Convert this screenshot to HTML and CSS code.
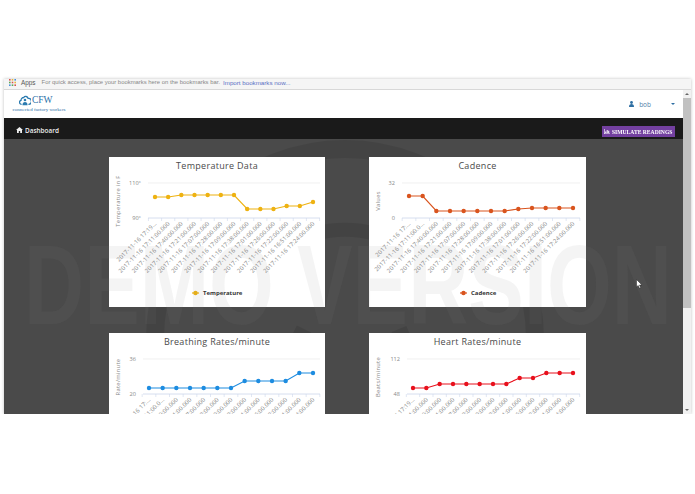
FILE: index.html
```html
<!DOCTYPE html>
<html lang="en">
<head>
  <meta charset="UTF-8" />
  <title>CFW Dashboard</title>
  <link rel="stylesheet" href="styles.css">
</head>
<body>
  <div class="window">
    <div class="bookmarks">
      <svg class="apps-icon" width="7" height="7" viewBox="0 0 7 7">
        <rect x="0" y="0" width="1.6" height="1.6" fill="#d9534f"/><rect x="2.7" y="0" width="1.6" height="1.6" fill="#e8b73a"/><rect x="5.4" y="0" width="1.6" height="1.6" fill="#4a90d9"/>
        <rect x="0" y="2.7" width="1.6" height="1.6" fill="#5aa65a"/><rect x="2.7" y="2.7" width="1.6" height="1.6" fill="#d9534f"/><rect x="5.4" y="2.7" width="1.6" height="1.6" fill="#e8b73a"/>
        <rect x="0" y="5.4" width="1.6" height="1.6" fill="#4a90d9"/><rect x="2.7" y="5.4" width="1.6" height="1.6" fill="#5aa65a"/><rect x="5.4" y="5.4" width="1.6" height="1.6" fill="#d9534f"/>
      </svg>
      <span class="apps">Apps</span>
      <span class="hint">For quick access, place your bookmarks here on the bookmarks bar.</span>
      <a class="import">Import bookmarks now...</a>
    </div>
    <div class="page">
      <div class="main">
        <header class="topbar">
          <div class="logo">
            <div class="logo-mark">
              <svg width="12" height="12" viewBox="0 0 14 13">
                <path d="M3 11.5H2.6A2.4 2.4 0 0 1 2.4 6.8 3 3 0 0 1 5.4 3.6 2.9 2.9 0 0 1 10.6 4.6 2.5 2.5 0 0 1 11.4 11.5H11" fill="none" stroke="#2b7bb0" stroke-width="1.5"/>
                <circle cx="7" cy="6.6" r="1.5" fill="#2b7bb0"/>
                <path d="M4 12.5C4 9.8 5.4 8.8 7 8.8S10 9.8 10 12.5Z" fill="#2b7bb0"/>
              </svg>
              <span class="logo-name">CFW</span>
            </div>
            <div class="logo-sub">connected factory workers</div>
          </div>
          <div class="user">
            <svg width="5" height="6" viewBox="0 0 5 6"><circle cx="2.5" cy="1.5" r="1.4" fill="#2f6fa3"/><path d="M0 6C0 3.8 1 3 2.5 3S5 3.8 5 6Z" fill="#2f6fa3"/></svg>
            <span class="user-name">bob</span>
            <span class="caret"></span>
          </div>
        </header>
        <nav class="navbar">
          <div class="nav-link">
            <svg width="7" height="6" viewBox="0 0 7 6"><path d="M3.5 0 7 3H6V6H4.2V4H2.8V6H1V3H0Z" fill="#eee"/></svg>
            <span>Dashboard</span>
          </div>
          <button class="simulate">
            <svg width="6" height="5" viewBox="0 0 6 5"><path d="M0 0H.6V4.4H6V5H0ZM1.2 2.4H2.2V4H1.2ZM2.7 1H3.7V4H2.7ZM4.2 1.8H5.2V4H4.2Z" fill="#fff"/></svg>
            <span>SIMULATE READINGS</span>
          </button>
        </nav>
        <section class="content">
          <svg class="mark-back" width="679" height="275" viewBox="0 0 679 275">
            <g fill="none" stroke="#000" stroke-opacity="0.09">
              <circle cx="341" cy="200" r="190" stroke-width="18"/>
              <path d="M245 145A112 112 0 0 1 437 145" stroke-width="14"/>
              <path d="M258 275 300 190M430 275 395 190" stroke-width="16"/>
            </g>
          </svg>
          <div class="charts" id="charts"></div>
          <svg class="mark-front" width="679" height="275" viewBox="0 0 679 275">
            <text x="20" y="185" textLength="648" lengthAdjust="spacingAndGlyphs" class="mark-text">DEMO VERSION</text>
          </svg>
          <svg class="cursor" width="7" height="10" viewBox="0 0 7 10"><path d="M.5.5V8L2.2 6.5 3.4 9.3 4.7 8.7 3.5 6H6Z" fill="#fff" stroke="#222" stroke-width=".5"/></svg>
        </section>
      </div>
      <div class="scrollbar">
        <span class="arrow arrow-up"></span>
        <div class="thumb"></div>
        <span class="arrow arrow-down"></span>
      </div>
    </div>
  </div>
  <script src="charts.js"></script>
</body>
</html>
```

FILE: styles.css
```css
body {
  margin: 0;
  background: white;
  font-family: 'Open Sans', 'Liberation Sans', sans-serif;
  overflow: hidden;
}

.window {
  width: 687px;
  height: 335px;
  margin: 79px 4px 0;
  display: flex;
  flex-direction: column;
  box-shadow: 0 0 3px rgba(0,0,0,0.25);
  filter: blur(0.35px);
}

.bookmarks {
  height: 10px;
  flex: none;
  display: flex;
  align-items: flex-start;
  background: #f5f5f5;
  border-bottom: 1px solid #d8d8d8;
  padding-left: 5px;
  font-family: 'Liberation Sans', sans-serif;
  font-size: 6.4px;
  line-height: 7px;
  white-space: nowrap;
  overflow: hidden;
}

.apps-icon {
  margin-right: 5px;
}

.apps {
  color: #555;
  margin-right: 6px;
}

.hint {
  color: #888;
  font-size: 5.9px;
  margin-right: 3px;
}

.import {
  color: #5a6fc4;
  font-size: 6.2px;
}

.page {
  flex: 1;
  display: flex;
  min-height: 0;
}

.main {
  flex: 1;
  display: flex;
  flex-direction: column;
  min-width: 0;
}

.topbar {
  height: 28px;
  flex: none;
  display: flex;
  align-items: center;
  justify-content: space-between;
  background: white;
}

.logo {
  margin-left: 8px;
  width: 54px;
  margin-top: -3px;
}

.logo-mark {
  display: flex;
  align-items: center;
  gap: 1px;
  height: 12px;
  padding-left: 7px;
}

.logo-name {
  font-family: 'Liberation Serif', serif;
  font-size: 9.5px;
  color: #2b6fa8;
}

.logo-sub {
  font-family: 'Liberation Serif', serif;
  font-size: 5px;
  color: #2b6fa8;
  text-align: center;
  white-space: nowrap;
  margin-top: 1px;
}

.user {
  display: flex;
  align-items: center;
  margin-right: 8px;
  font-size: 6.5px;
  color: #4d7ea8;
}

.user-name {
  margin-left: 5px;
  margin-right: 20px;
}

.caret {
  width: 0;
  height: 0;
  border-left: 2px solid transparent;
  border-right: 2px solid transparent;
  border-top: 2px solid #2f6fa3;
}

.navbar {
  height: 21px;
  flex: none;
  display: flex;
  align-items: center;
  justify-content: space-between;
  background: #1a1a1a;
  padding: 0 8px 0 12px;
}

.nav-link {
  display: flex;
  align-items: center;
  gap: 2px;
  color: #eee;
  font-size: 6.4px;
  font-weight: 600;
  margin-top: 3px;
}

.simulate {
  display: flex;
  align-items: center;
  gap: 2px;
  height: 11px;
  width: 73px;
  padding: 0 0 0 2px;
  margin-top: 6px;
  border: none;
  background: #7340a0;
  color: white;
  font-family: 'Liberation Serif', serif;
  font-size: 5.6px;
  font-weight: bold;
  white-space: nowrap;
}

.simulate svg {
  flex: none;
}

.content {
  flex: 1;
  position: relative;
  overflow: hidden;
  background: #4a4a4a;
  padding: 18px 0 0 105px;
}

.charts {
  position: relative;
  display: grid;
  grid-template-columns: 216px 217px;
  column-gap: 44px;
  row-gap: 26px;
}

.card {
  height: 150px;
  background: white;
}

.card svg {
  display: block;
}

.chart-title {
  font-family: 'Open Sans', sans-serif;
  font-size: 9px;
  letter-spacing: 0.3px;
  fill: #4a4a4a;
}

.axis-title {
  font-size: 5.8px;
  fill: #888;
  letter-spacing: 0.3px;
}

.axis-label {
  font-size: 5.6px;
  fill: #888;
}

.tick-label {
  font-size: 5.9px;
  fill: #888;
  letter-spacing: 0.1px;
}

.legend-text {
  font-size: 6px;
  font-weight: bold;
  fill: #333;
}

.mark-back,
.mark-front {
  position: absolute;
  left: 0;
  top: 0;
}

.mark-front {
  pointer-events: none;
}

.mark-text {
  font-family: 'Liberation Sans', sans-serif;
  font-size: 114px;
  font-weight: bold;
  fill: #808080;
  fill-opacity: 0.09;
}

.cursor {
  position: absolute;
  left: 632px;
  top: 140px;
}

.scrollbar {
  width: 8px;
  flex: none;
  display: flex;
  flex-direction: column;
  align-items: center;
  background: #f1f1f1;
}

.arrow {
  width: 0;
  height: 0;
  flex: none;
  border-left: 2px solid transparent;
  border-right: 2px solid transparent;
  margin: 3px 0;
}

.arrow-up {
  border-bottom: 2px solid #666;
}

.arrow-down {
  border-top: 2px solid #666;
  margin-top: auto;
}

.thumb {
  width: 8px;
  height: 210px;
  background: #c1c1c1;
}
```

FILE: charts.js
```js
const SVG_NS = 'http://www.w3.org/2000/svg';

const times = ['17:11:00.000', '17:40:00.000', '17:21:00.000', '17:07:00.000', '17:28:00.000', '17:09:00.000',
  '17:38:00.000', '17:01:00.000', '17:26:00.000', '17:22:00.000', '16:51:00.000', '17:24:00.000'];

// pixel positions are relative to the card
const charts = [
  {
    title: 'Temperature Data', series: 'Temperature', color: '#eeb211', axis: 'Temperature in F',
    top: '110°', bottom: '90°', left: 39, first: 46, legendX: 83, axisX: 11, gridTop: 26,
    ys: [40, 40, 38, 38, 38, 38, 38, 52, 52, 52, 49, 49, 45],
    labels: ['2017-11-16 17:19...'].concat(times.map(t => '2017-11-16 ' + t))
  },
  {
    title: 'Cadence', series: 'Cadence', color: '#d9541e', axis: 'Values',
    top: '32', bottom: '0', left: 33, first: 40, legendX: 91, axisX: 11, gridTop: 26,
    ys: [39, 39, 54, 54, 54, 54, 54, 54, 52, 51, 51, 51, 51],
    labels: ['2017-11-16 17:...', '2017-11-16 17:11:00.0...'].concat(times.slice(1).map(t => '2017-11-16 ' + t))
  },
  {
    title: 'Breathing Rates/minute', series: 'Breathing', color: '#1d8ce0', axis: 'Rate/minute',
    top: '36', bottom: '20', left: 34, first: 40, legendX: 83, axisX: 11, gridTop: 26,
    ys: [55, 55, 55, 55, 55, 55, 55, 48, 48, 48, 48, 40, 40],
    labels: ['2017-11-16 17:...', '2017-11-16 17:11:00.0...'].concat(times.slice(1).map(t => '2017-11-16 ' + t))
  },
  {
    title: 'Heart Rates/minute', series: 'Heart', color: '#e8101c', axis: 'Beats/minute',
    top: '112', bottom: '48', left: 38, first: 44, legendX: 91, axisX: 11, gridTop: 26,
    ys: [55, 55, 51, 51, 51, 51, 51, 51, 45, 45, 40, 40, 40],
    labels: ['2017-11-16 17:19...'].concat(times.map(t => '2017-11-16 ' + t))
  }
];

function el(parent, name, attrs, text) {
  const node = document.createElementNS(SVG_NS, name);
  Object.keys(attrs).forEach(key => node.setAttribute(key, attrs[key]));
  if (text) node.textContent = text;
  parent.appendChild(node);
  return node;
}

function renderChart(chart) {
  const card = document.createElement('div');
  card.className = 'card';
  const svg = el(card, 'svg', { width: '100%', height: 150 });

  const right = 211;
  const base = chart.gridTop + 35;
  const last = 204;
  const step = (last - chart.first) / (chart.ys.length - 1);

  el(svg, 'text', { x: '50%', y: 12, 'text-anchor': 'middle', class: 'chart-title' }, chart.title);

  const axisY = chart.gridTop + 18;
  el(svg, 'text', {
    x: chart.axisX, y: axisY, 'text-anchor': 'middle', class: 'axis-title',
    transform: `rotate(-90 ${chart.axisX} ${axisY})`
  }, chart.axis);

  el(svg, 'text', { x: chart.left - 7, y: chart.gridTop + 2, 'text-anchor': 'end', class: 'axis-label' }, chart.top);
  el(svg, 'text', { x: chart.left - 7, y: base + 2, 'text-anchor': 'end', class: 'axis-label' }, chart.bottom);

  el(svg, 'line', { x1: chart.left, x2: right, y1: chart.gridTop, y2: chart.gridTop, stroke: '#e6e6e6', 'stroke-width': 0.6 });
  el(svg, 'line', { x1: chart.left, x2: right, y1: base, y2: base, stroke: '#ccd6eb', 'stroke-width': 0.8 });

  for (let i = 0; i <= chart.ys.length; i++) {
    const x = chart.first + step * (i - 0.5);
    el(svg, 'line', { x1: x, x2: x, y1: base, y2: base + 3, stroke: '#ccd6eb', 'stroke-width': 0.6 });
  }

  chart.labels.forEach((label, i) => {
    const x = chart.first + step * i + 2;
    const y = base + 6;
    el(svg, 'text', {
      x, y, 'text-anchor': 'end', class: 'tick-label', transform: `rotate(-45 ${x} ${y})`
    }, label);
  });

  const points = chart.ys.map((y, i) => `${chart.first + step * i},${y}`).join(' ');
  el(svg, 'polyline', { points, fill: 'none', stroke: chart.color, 'stroke-width': 1.2 });
  chart.ys.forEach((y, i) => {
    el(svg, 'circle', { cx: chart.first + step * i, cy: y, r: 2.2, fill: chart.color });
  });

  el(svg, 'line', { x1: chart.legendX, x2: chart.legendX + 7, y1: 136, y2: 136, stroke: chart.color, 'stroke-width': 1.2 });
  el(svg, 'circle', { cx: chart.legendX + 3.5, cy: 136, r: 2.2, fill: chart.color });
  el(svg, 'text', { x: chart.legendX + 11, y: 138, class: 'legend-text' }, chart.series);

  return card;
}

const holder = document.getElementById('charts');
charts.forEach(chart => holder.appendChild(renderChart(chart)));
```
